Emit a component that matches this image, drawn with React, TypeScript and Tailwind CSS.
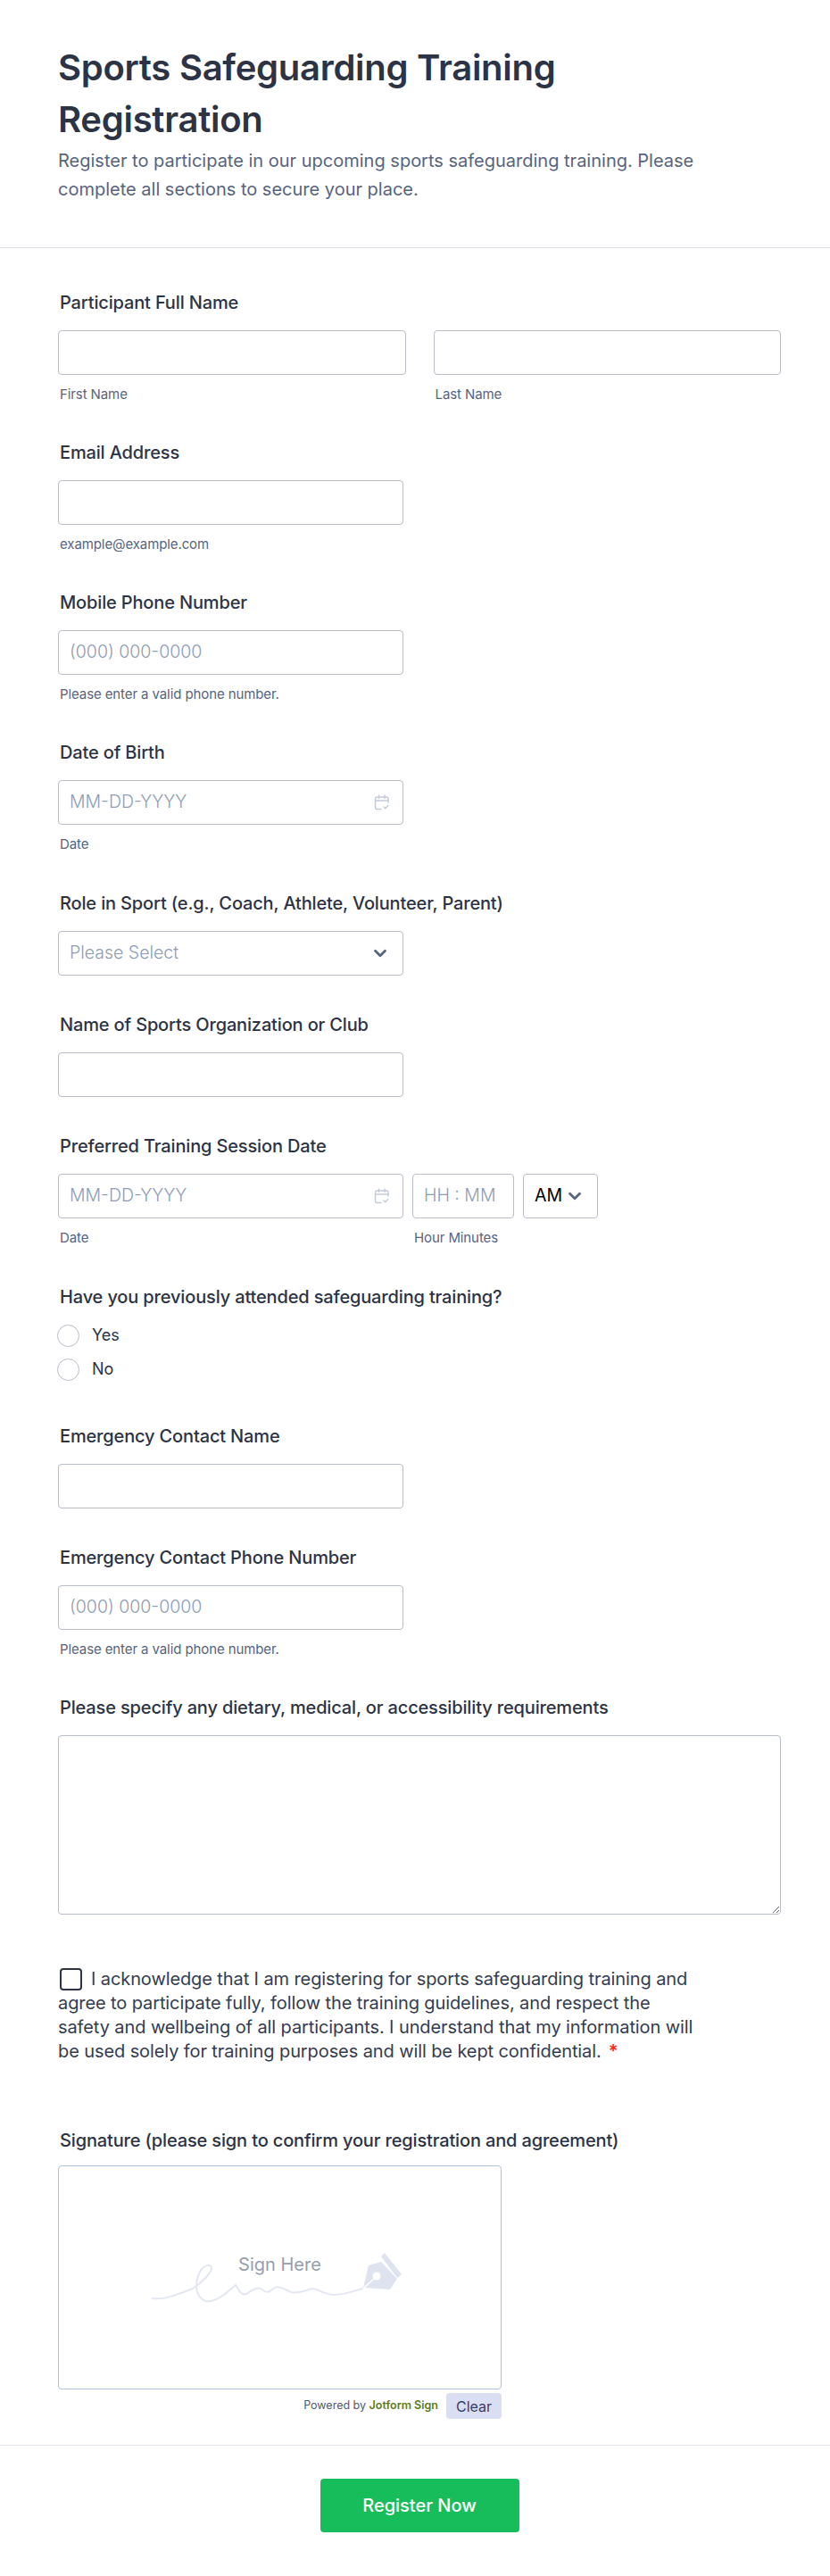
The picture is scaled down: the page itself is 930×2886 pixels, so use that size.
import { ChevronDown } from 'lucide-react';

function CalendarIcon() {
  return (
    <svg width="18" height="18" viewBox="0 0 18 18" fill="none" stroke="#c3cad8" strokeWidth="1.4" strokeLinecap="round" strokeLinejoin="round">
      <path d="M16 9V5a2 2 0 0 0-2-2H3.500a2 2 0 0 0-2 2v9.500a2 2 0 0 0 2 2H8" />
      <path d="M1.500 7h14.500M5.500 1v3.500M12 1v3.500" />
      <path d="M11 14l1.800 1.800 3-3.300" />
    </svg>
  );
}

function Label({ children }: { children: React.ReactNode }) {
  return <label className="block h-6 pl-[2px] text-xl leading-6 font-[450] tracking-[-0.15px] text-[#2c3345]">{children}</label>;
}

function Sub({ children }: { children: React.ReactNode }) {
  return <div className="mt-[11px] h-[21px] pl-[2px] text-[15px] leading-[21px] tracking-[-0.1px] text-[#57647e]">{children}</div>;
}

function Box({ className = '', children }: { className?: string; children?: React.ReactNode }) {
  return (
    <div className={`flex h-[50px] items-center rounded border border-[#b8bdc9] bg-white pr-[14px] pl-3 text-[19.5px] font-light text-[#8d9db5] ${className}`}>
      {children}
    </div>
  );
}

function Field({ label, children, className = 'pb-[43px]' }: { label: string; children: React.ReactNode; className?: string }) {
  return (
    <div className={className}>
      <Label>{label}</Label>
      <div className="mt-[19px]">{children}</div>
    </div>
  );
}

function Radio({ label }: { label: string }) {
  return (
    <div className="flex h-[38px] items-center gap-[14px] text-lg text-[#2c3345]">
      <span className="ml-[-1px] h-[25px] w-[25px] rounded-full border border-[#b8bdc9] bg-white" />
      <span>{label}</span>
    </div>
  );
}

function SignHere() {
  return (
    <svg className="absolute top-[63px] left-[84px]" width="320" height="100" viewBox="0 0 320 100" fill="none">
      <path
        d="M21 85C35 87 50 80 66 74C75 68 88 56 87 50C85 46 78 48 74 55C68 68 68 82 80 88C92 90 105 78 114 70C118 76 120 82 126 80C132 76 138 72 142 74C148 78 150 80 156 74C162 70 168 74 176 78C184 80 192 76 200 74C206 74 212 80 224 81C236 81 246 77 256 74"
        stroke="#e3e7f1"
        strokeWidth="2"
        strokeLinecap="round"
      />
      <path d="M257 73L263 48L277 44L295 63L287 75Z" fill="#dfe3ef" />
      <path d="M277 38L281 34L300 58L295 62Z" fill="#dfe3ef" />
      <circle cx="272" cy="60" r="4.500" fill="#fff" />
      <path d="M258 73L270 62" stroke="#fff" strokeWidth="1.500" />
    </svg>
  );
}

export default function App() {
  return (
    <div className="min-h-[2886px] bg-white font-['Inter',sans-serif]">
      <header className="h-[278px] border-b border-[#d8dae5] pt-[47px] pr-[55px] pl-[65px]">
        <h1 className="max-w-[700px] text-[40px] leading-[58px] font-semibold tracking-[-0.27px] text-[#2c3345]">Sports Safeguarding Training Registration</h1>
        <p className="mt-px max-w-[760px] text-xl leading-8 text-[#57647e]">
          Register to participate in our upcoming sports safeguarding training. Please complete all sections to secure your place.
        </p>
      </header>

      <main className="pt-[49px] pr-[55px] pl-[65px]">
        <Field label="Participant Full Name">
          <div className="grid grid-cols-2 gap-[31px]">
            <div>
              <Box />
              <Sub>First Name</Sub>
            </div>
            <div>
              <Box />
              <Sub>Last Name</Sub>
            </div>
          </div>
        </Field>

        <Field label="Email Address">
          <Box className="w-[387px]" />
          <Sub>example@example.com</Sub>
        </Field>

        <Field label="Mobile Phone Number">
          <Box className="w-[387px]">(000) 000-0000</Box>
          <Sub>Please enter a valid phone number.</Sub>
        </Field>

        <Field label="Date of Birth" className="pb-[44px]">
          <Box className="w-[387px] justify-between">
            MM-DD-YYYY
            <CalendarIcon />
          </Box>
          <Sub>Date</Sub>
        </Field>

        <Field label="Role in Sport (e.g., Coach, Athlete, Volunteer, Parent)">
          <Box className="w-[387px] justify-between pr-2">
            Please Select
            <ChevronDown size={22} strokeWidth={3} className="text-[#57647e]" />
          </Box>
        </Field>

        <Field label="Name of Sports Organization or Club">
          <Box className="w-[387px]" />
        </Field>

        <Field label="Preferred Training Session Date" className="pb-[44px]">
          <div className="flex gap-[10px]">
            <div>
              <Box className="w-[387px] justify-between">
                MM-DD-YYYY
                <CalendarIcon />
              </Box>
              <Sub>Date</Sub>
            </div>
            <div>
              <Box className="w-[114px]">HH : MM</Box>
              <Sub>Hour Minutes</Sub>
            </div>
            <Box className="w-[84px] justify-between pr-[7px] font-normal text-black">
              AM
              <ChevronDown size={22} strokeWidth={3} className="text-[#57647e]" />
            </Box>
          </div>
        </Field>

        <div className="pb-[44px]">
          <Label>Have you previously attended safeguarding training?</Label>
          <div className="mt-3">
            <Radio label="Yes" />
            <Radio label="No" />
          </div>
        </div>

        <Field label="Emergency Contact Name">
          <Box className="w-[387px]" />
        </Field>

        <Field label="Emergency Contact Phone Number">
          <Box className="w-[387px]">(000) 000-0000</Box>
          <Sub>Please enter a valid phone number.</Sub>
        </Field>

        <Field label="Please specify any dietary, medical, or accessibility requirements" className="pb-[59px]">
          <textarea readOnly className="block h-[201px] w-full rounded border border-[#b8bdc9] bg-white" />
        </Field>

        <div className="w-[722px] pb-[74px] text-xl leading-[27px] tracking-[-0.1px] text-[#343c50]">
          <span className="mr-[10px] ml-[2px] inline-block h-[25px] w-[25px] rounded border-2 border-[#2c3345] align-[-6px]" />
          I acknowledge that I am registering for sports safeguarding training and agree to participate fully, follow the training guidelines, and respect the safety and wellbeing of all participants. I understand that my information will be used solely for training purposes and will be kept confidential.
          <span className="ml-2 font-semibold text-[#ff1f1f]">*</span>
        </div>

        <div>
          <Label>Signature (please sign to confirm your registration and agreement)</Label>
          <div className="relative mt-4 h-[251px] w-[497px] rounded border border-[#aec3e0] bg-white">
            <SignHere />
            <div className="pt-[96px] text-center text-xl leading-7 text-[#979dae]">Sign Here</div>
          </div>
          <div className="mt-1 flex w-[497px] items-center justify-end gap-[9px]">
            <span className="text-[12.5px] text-[#4f5a70]">
              Powered by <span className="font-semibold text-[#5b7d1f]">Jotform Sign</span>
            </span>
            <button className="h-[29px] w-[62px] rounded bg-[#dadef3] text-base text-[#343c6a]">Clear</button>
          </div>
        </div>
      </main>

      <footer className="mt-[29px] flex justify-center border-t border-[#e3e5ee] pt-[37px] pl-[10px]">
        <button className="h-[60px] w-[223px] rounded bg-[#18bd5b] text-xl font-medium text-white">Register Now</button>
      </footer>
    </div>
  );
}
